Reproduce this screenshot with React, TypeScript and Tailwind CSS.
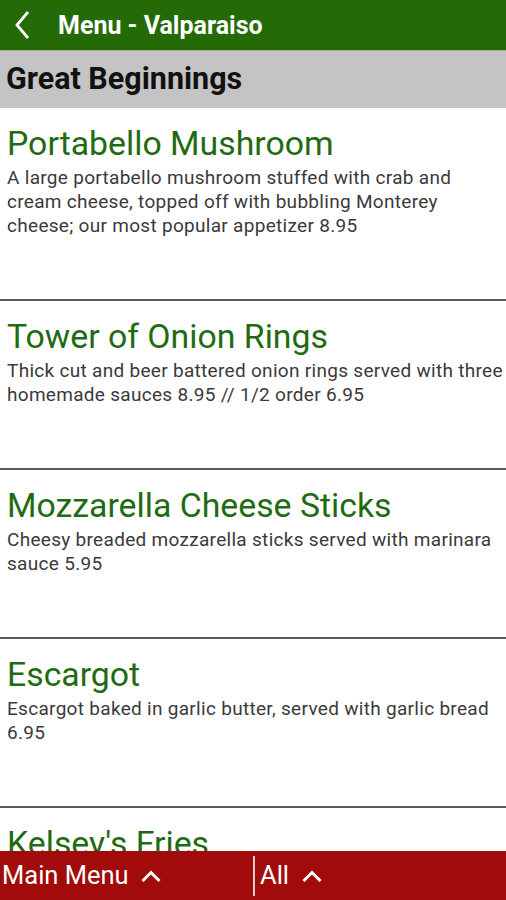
import React from "react";

const items = [
  {
    title: "Portabello Mushroom",
    desc: "A large portabello mushroom stuffed with crab and cream cheese, topped off with bubbling Monterey cheese; our most popular appetizer 8.95",
  },
  {
    title: "Tower of Onion Rings",
    desc: "Thick cut and beer battered onion rings served with three homemade sauces 8.95 // 1/2 order 6.95",
  },
  {
    title: "Mozzarella Cheese Sticks",
    desc: "Cheesy breaded mozzarella sticks served with marinara sauce 5.95",
  },
  {
    title: "Escargot",
    desc: "Escargot baked in garlic butter, served with garlic bread 6.95",
  },
  {
    title: "Kelsey's Fries",
    desc: "",
  },
];

function ChevronUp() {
  return (
    <svg width="22" height="14" viewBox="0 0 22 14" fill="none">
      <path d="M2.5 12 L11 3.5 L19.5 12" stroke="white" strokeWidth="3" />
    </svg>
  );
}

export default function App() {
  return (
    <div
      className="w-[506px] h-[900px] overflow-hidden bg-white flex flex-col"
      style={{ fontFamily: "Roboto, 'Liberation Sans', sans-serif" }}
    >
      <div className="h-[50px] shrink-0 bg-[#246a07] flex items-center">
        <svg width="20" height="32" viewBox="0 0 20 32" className="ml-[11px]" fill="none">
          <path d="M17 3 L6 16 L17 29" stroke="white" strokeWidth="2.8" />
        </svg>
        <span className="ml-[27px] text-white font-bold text-[25px] leading-none">Menu - Valparaiso</span>
      </div>
      <div className="h-[58px] shrink-0 bg-[#c4c4c4] border-t border-[#a8a8a8] flex items-center px-[6px]">
        <span className="text-[#111] font-bold text-[30.5px] leading-none">Great Beginnings</span>
      </div>
      <div className="flex-1 min-h-0 overflow-hidden flex flex-col">
        {items.map((it, i) => (
          <div key={i} className="shrink-0 border-b-2 border-[#5a5a5a] pl-[7px] pr-0 pt-[16px] pb-[61px]">
            <div className="text-[#1f6b12] text-[33.8px] leading-[40px]">{it.title}</div>
            {it.desc && (
              <div className="text-[#3a3a3a] text-[19px] leading-[24px] tracking-[0.3px] mt-[2px]">{it.desc}</div>
            )}
          </div>
        ))}
      </div>
      <div className="h-[49px] shrink-0 bg-[#a20b0b] flex items-center">
        <div className="w-[253px] flex items-center pl-[2px] gap-[11px]">
          <span className="text-white text-[25.5px] leading-none">Main Menu</span>
          <ChevronUp />
        </div>
        <div className="w-[2px] h-[40px] bg-[#ecc8c8]" />
        <div className="flex items-center pl-[5px] gap-[12px]">
          <span className="text-white text-[25.5px] leading-none">All</span>
          <ChevronUp />
        </div>
      </div>
    </div>
  );
}
